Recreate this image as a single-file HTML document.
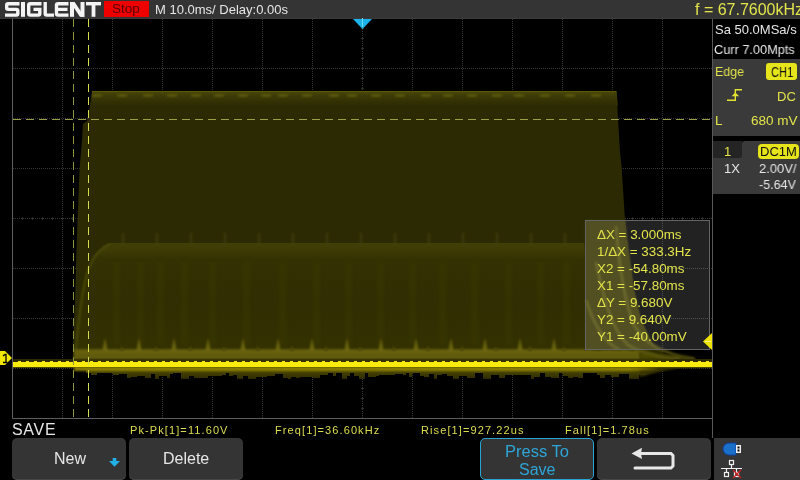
<!DOCTYPE html>
<html><head><meta charset="utf-8">
<style>
html,body{margin:0;padding:0;background:#000;width:800px;height:480px;overflow:hidden;}
body{position:relative;font-family:"Liberation Sans",sans-serif;}
.a{position:absolute;white-space:pre;line-height:1;will-change:transform;}
.y{color:#e2e44a;}
.w{color:#e6e6e6;}
.m{position:absolute;white-space:pre;line-height:1;font-family:"Liberation Sans",sans-serif;font-size:11px;letter-spacing:1.1px;color:#dcdc50;will-change:transform;}
.btn{position:absolute;background:#343434;border-radius:5px;}
svg{position:absolute;left:0;top:0;}
</style></head><body>
<!-- top bar -->
<div style="position:absolute;left:0;top:0;width:800px;height:18px;background:#343434;"></div><div style="position:absolute;left:0;top:18px;width:800px;height:1px;background:#3a3a3a;"></div>
<svg width="800" height="20" viewBox="0 0 800 20">
  <g fill="none" stroke="#f4f4f4" stroke-width="3.4">
    <path d="M19.5 3.7H8.2Q6.7 3.7 6.7 5.2V7.8Q6.7 9.35 8.2 9.35H16.3Q17.8 9.35 17.8 10.85V13.6Q17.8 15.1 16.3 15.1H5"/>
    <path d="M41.5 3.7H30.3Q28.7 3.7 28.7 5.3V13.5Q28.7 15.1 30.3 15.1H38.2Q39.8 15.1 39.8 13.5V9.35H33.5"/>
    <path d="M45.2 2V13.5Q45.2 15.1 46.8 15.1H54"/>
    <path d="M68.5 3.7H58.1Q56.5 3.7 56.5 5.3V13.5Q56.5 15.1 58.1 15.1H68.5M56.5 9.35H67.5"/>
  </g>
  <g fill="#f4f4f4">
    <rect x="21" y="2" width="4" height="14.8"/>
    <rect x="70" y="2" width="4" height="14.8"/>
    <rect x="80.5" y="2" width="4" height="14.8"/>
    <path d="M70 2H74.6L84.5 16.8H79.9Z"/>
    <rect x="86" y="2" width="15" height="3.4"/>
    <rect x="91.6" y="2" width="3.8" height="14.8"/>
  </g>
</svg>
<div style="position:absolute;left:104px;top:1px;width:45px;height:16px;background:#ee0000;"></div>
<div class="a" style="left:112px;top:2px;font-size:13.5px;color:#560000;">Stop</div>
<div class="a w" style="left:155px;top:2.5px;font-size:13px;">M 10.0ms/ Delay:0.00s</div>
<div class="a y" style="left:695px;top:2px;font-size:16px;">f = 67.7600kHz</div>
<!-- grid & waveform -->
<svg width="800" height="480" viewBox="0 0 800 480">
  <defs>
    <linearGradient id="tg" x1="0" y1="0" x2="0" y2="1">
      <stop offset="0" stop-color="#4a480a"/>
      <stop offset="0.35" stop-color="#3c3a06"/>
      <stop offset="1" stop-color="#2c2a02"/>
    </linearGradient>
    <linearGradient id="bg" x1="0" y1="0" x2="0" y2="1">
      <stop offset="0" stop-color="#5a5404"/>
      <stop offset="0.5" stop-color="#423e02"/>
      <stop offset="1" stop-color="#2e2a02"/>
    </linearGradient>
    <linearGradient id="ig" x1="0" y1="0" x2="0" y2="1">
      <stop offset="0" stop-color="#423f06"/>
      <stop offset="0.06" stop-color="#3e3b05"/>
      <stop offset="0.14" stop-color="#343203"/>
      <stop offset="0.5" stop-color="#302e02"/>
      <stop offset="1" stop-color="#343202"/>
    </linearGradient>
    <linearGradient id="lg" x1="0" y1="0" x2="0" y2="1">
      <stop offset="0" stop-color="#5a5608"/>
      <stop offset="0.25" stop-color="#6a640c"/>
      <stop offset="0.6" stop-color="#5e5808"/>
      <stop offset="1" stop-color="#6a620a"/>
    </linearGradient>
    <filter id="bl" x="-50%" y="-50%" width="200%" height="200%"><feGaussianBlur stdDeviation="1.5"/></filter>
    <filter id="bl1" x="-10%" y="-50%" width="120%" height="200%"><feGaussianBlur stdDeviation="0.8"/></filter>
  </defs>
  <g stroke="#363636" stroke-width="1" stroke-dasharray="1 1" fill="none">
    <path d="M62.5 19V418M112.5 19V418M162.5 19V418M212.5 19V418M262.5 19V418M312.5 19V418M362.5 19V418M412.5 19V418M462.5 19V418M512.5 19V418M562.5 19V418M612.5 19V418M662.5 19V418"/>
    <path d="M13 68.5H712M13 118.5H712M13 168.5H712M13 218.5H712M13 268.5H712M13 318.5H712M13 368.5H712"/>
  </g>
  <path d="M22.5 217V220 M32.5 217V220 M42.5 217V220 M52.5 217V220 M62.5 217V220 M72.5 217V220 M82.5 217V220 M92.5 217V220 M102.5 217V220 M112.5 217V220 M122.5 217V220 M132.5 217V220 M142.5 217V220 M152.5 217V220 M162.5 217V220 M172.5 217V220 M182.5 217V220 M192.5 217V220 M202.5 217V220 M212.5 217V220 M222.5 217V220 M232.5 217V220 M242.5 217V220 M252.5 217V220 M262.5 217V220 M272.5 217V220 M282.5 217V220 M292.5 217V220 M302.5 217V220 M312.5 217V220 M322.5 217V220 M332.5 217V220 M342.5 217V220 M352.5 217V220 M362.5 217V220 M372.5 217V220 M382.5 217V220 M392.5 217V220 M402.5 217V220 M412.5 217V220 M422.5 217V220 M432.5 217V220 M442.5 217V220 M452.5 217V220 M462.5 217V220 M472.5 217V220 M482.5 217V220 M492.5 217V220 M502.5 217V220 M512.5 217V220 M522.5 217V220 M532.5 217V220 M542.5 217V220 M552.5 217V220 M562.5 217V220 M572.5 217V220 M582.5 217V220 M592.5 217V220 M602.5 217V220 M612.5 217V220 M622.5 217V220 M632.5 217V220 M642.5 217V220 M652.5 217V220 M662.5 217V220 M672.5 217V220 M682.5 217V220 M692.5 217V220 M702.5 217V220 M361 28.5H364 M361 38.5H364 M361 48.5H364 M361 58.5H364 M361 68.5H364 M361 78.5H364 M361 88.5H364 M361 98.5H364 M361 108.5H364 M361 118.5H364 M361 128.5H364 M361 138.5H364 M361 148.5H364 M361 158.5H364 M361 168.5H364 M361 178.5H364 M361 188.5H364 M361 198.5H364 M361 208.5H364 M361 218.5H364 M361 228.5H364 M361 238.5H364 M361 248.5H364 M361 258.5H364 M361 268.5H364 M361 278.5H364 M361 288.5H364 M361 298.5H364 M361 308.5H364 M361 318.5H364 M361 328.5H364 M361 338.5H364 M361 348.5H364 M361 358.5H364 M361 368.5H364 M361 378.5H364 M361 388.5H364 M361 398.5H364 M361 408.5H364" stroke="#2c2c2c" stroke-width="1" fill="none"/>
  <path d="M12.5 19V418.5H712" stroke="#5e5e5e" stroke-width="1" fill="none"/>

  <!-- waveform persistence -->
  <path d="M73 358 L73.5 330 L75 300 L76.5 250 L77.5 220 L79.5 170 L82 140 L83 124 L87 121 L89.5 108 L92 91 L616.5 91 L618 119 L620 152 L621.5 166 L625 220 L628 246 L634 290 L641 320 L653 345 L665 354 L690 359 L712 359 L712 368 L660 369 L640 372 L100 372 L88 370 L78 369 L73 367 Z" fill="#2c2a02"/>
  <path d="M92 91H616.5L618 106H92Z" fill="url(#tg)"/>
  <path d="M92 91.5H616" stroke="#5a5608" stroke-width="1.2"/>
  <path d="M92 95.5H616" stroke="#44420a" stroke-width="1.5" filter="url(#bl1)"/><g filter="url(#bl1)" fill="#6a6616" opacity="0.8"><ellipse cx="97" cy="95.5" rx="5.5" ry="1.2"/><ellipse cx="122" cy="95.5" rx="5.5" ry="1.2"/><ellipse cx="148" cy="95.5" rx="5.5" ry="1.2"/><ellipse cx="172" cy="95.5" rx="5.5" ry="1.2"/><ellipse cx="196" cy="95.5" rx="5.5" ry="1.2"/><ellipse cx="219" cy="95.5" rx="5.5" ry="1.2"/><ellipse cx="243" cy="95.5" rx="5.5" ry="1.2"/><ellipse cx="266" cy="95.5" rx="5.5" ry="1.2"/><ellipse cx="283" cy="95.5" rx="5.5" ry="1.2"/><ellipse cx="307" cy="95.5" rx="5.5" ry="1.2"/><ellipse cx="334" cy="95.5" rx="5.5" ry="1.2"/><ellipse cx="352" cy="95.5" rx="5.5" ry="1.2"/><ellipse cx="376" cy="95.5" rx="5.5" ry="1.2"/><ellipse cx="400" cy="95.5" rx="5.5" ry="1.2"/><ellipse cx="426" cy="95.5" rx="5.5" ry="1.2"/><ellipse cx="448" cy="95.5" rx="5.5" ry="1.2"/><ellipse cx="472" cy="95.5" rx="5.5" ry="1.2"/><ellipse cx="497" cy="95.5" rx="5.5" ry="1.2"/><ellipse cx="519" cy="95.5" rx="5.5" ry="1.2"/><ellipse cx="545" cy="95.5" rx="5.5" ry="1.2"/><ellipse cx="570" cy="95.5" rx="5.5" ry="1.2"/><ellipse cx="596" cy="95.5" rx="5.5" ry="1.2"/></g>
  <path d="M74 358 C77 320 82 290 88 270 C92 259 98 249 110 243 L584 243 L592 300 L612 350 L74 350Z" fill="url(#ig)"/>
  <path d="M116.5 262V345 M140.5 262V345 M160.5 262V345 M184.5 262V345 M212.5 262V345 M246.5 262V345 M282.5 262V345 M316.5 262V345 M348.5 262V345 M380.5 262V345 M412.5 262V345 M442.5 262V345 M474.5 262V345 M508.5 262V345 M540.5 262V345 M566.5 262V345" stroke="#3c3a04" stroke-width="7" opacity="0.35" filter="url(#bl)"/>
  <path d="M75 362 C78 320 82 290 88 270 C92 259 98 249 110 244" stroke="#4c4a08" stroke-width="2" fill="none" filter="url(#bl1)"/>
  <path d="M123 246V233 M157 246V233 M191 246V233 M225 246V233 M259 246V233 M293 246V233 M327 246V233 M361 246V233 M395 246V233 M429 246V233 M463 246V233 M497 246V233 M531 246V233 M565 246V233" stroke="#44420a" stroke-width="1.5" filter="url(#bl1)"/>
  <path d="M74 349 H640 V359 H74Z" fill="url(#lg)" filter="url(#bl1)"/>
  <path d="M640 349 L640 359 L672 359 C660 356 650 352 640 349Z" fill="#4a4606" filter="url(#bl1)"/>
  <path d="M102 352 L105 338 L108 352Z M136 352 L139 338 L142 352Z M171 352 L174 338 L177 352Z M205 352 L208 338 L211 352Z M240 352 L243 338 L246 352Z M275 352 L278 338 L281 352Z M309 352 L312 338 L315 352Z M344 352 L347 338 L350 352Z M378 352 L381 338 L384 352Z M413 352 L416 338 L419 352Z M448 352 L451 338 L454 352Z M482 352 L485 338 L488 352Z M517 352 L520 338 L523 352Z M551 352 L554 338 L557 352Z M586 352 L589 338 L592 352Z M621 352 L624 338 L627 352Z" fill="#6a640c" filter="url(#bl1)"/>
  <path d="M119.5 351 L122 346 L124.5 351Z M153.5 351 L156 346 L158.5 351Z M187.5 351 L190 346 L192.5 351Z M221.5 351 L224 346 L226.5 351Z M255.5 351 L258 346 L260.5 351Z M289.5 351 L292 346 L294.5 351Z M323.5 351 L326 346 L328.5 351Z M357.5 351 L360 346 L362.5 351Z M391.5 351 L394 346 L396.5 351Z M425.5 351 L428 346 L430.5 351Z M459.5 351 L462 346 L464.5 351Z M493.5 351 L496 346 L498.5 351Z M527.5 351 L530 346 L532.5 351Z M561.5 351 L564 346 L566.5 351Z M595.5 351 L598 346 L600.5 351Z M629.5 351 L632 346 L634.5 351Z" fill="#4e4a08" filter="url(#bl1)"/>
  <path d="M74 367 L74 368 L78 368 L78 369 L86 369 L86 373 L91 373 L91 375 L97 375 L97 373 L105 373 L105 373 L113 373 L113 375 L119 375 L119 374 L127 374 L127 378 L131 378 L131 377 L137 377 L137 376 L145 376 L145 378 L151 378 L151 374 L155 374 L155 379 L159 379 L159 376 L167 376 L167 378 L170 378 L170 374 L173 374 L173 373 L181 373 L181 379 L186 379 L186 379 L189 379 L189 376 L194 376 L194 378 L202 378 L202 378 L208 378 L208 376 L214 376 L214 376 L222 376 L222 375 L226 375 L226 373 L229 373 L229 376 L233 376 L233 375 L237 375 L237 379 L243 379 L243 376 L248 376 L248 379 L256 379 L256 377 L262 377 L262 377 L267 377 L267 376 L275 376 L275 374 L283 374 L283 378 L288 378 L288 379 L291 379 L291 377 L296 377 L296 378 L300 378 L300 377 L305 377 L305 377 L313 377 L313 378 L316 378 L316 378 L320 378 L320 375 L328 375 L328 373 L333 373 L333 376 L336 376 L336 373 L342 373 L342 379 L347 379 L347 376 L350 376 L350 373 L354 373 L354 376 L359 376 L359 379 L365 379 L365 373 L368 373 L368 377 L376 377 L376 376 L379 376 L379 375 L387 375 L387 375 L395 375 L395 374 L403 374 L403 375 L406 375 L406 373 L409 373 L409 377 L412 377 L412 373 L420 373 L420 376 L424 376 L424 377 L429 377 L429 374 L434 374 L434 379 L437 379 L437 375 L442 375 L442 374 L447 374 L447 376 L453 376 L453 379 L459 379 L459 376 L467 376 L467 378 L475 378 L475 373 L483 373 L483 379 L491 379 L491 375 L499 375 L499 378 L505 378 L505 375 L509 375 L509 375 L515 375 L515 375 L523 375 L523 375 L531 375 L531 379 L534 379 L534 377 L540 377 L540 373 L545 373 L545 377 L551 377 L551 378 L559 378 L559 373 L563 373 L563 376 L568 376 L568 378 L573 378 L573 377 L578 377 L578 378 L583 378 L583 373 L589 373 L589 373 L597 373 L597 375 L600 375 L600 378 L605 378 L605 375 L611 375 L611 377 L619 377 L619 374 L624 374 L624 374 L629 374 L629 379 L634 379 L634 379 L639 379 L639 375 L647 375 L640 367 Z" fill="url(#bg)"/>
  <path d="M640 367 L640 377 C650 374 660 371 680 368 Z" fill="#3a3602" filter="url(#bl1)"/>
  <path d="M585 220 L625 220 L628 246 L634 290 L641 320 L653 345 L660 350 L585 350Z" fill="#383604" filter="url(#bl1)"/>
  <g fill="none" stroke="#5a560c" stroke-width="3" filter="url(#bl1)" opacity="0.9">
    <path d="M616 226 C619 265 624 300 634 325 C644 342 660 354 695 359"/>
    <path d="M596 262 C604 300 612 330 628 345 C642 354 660 357 680 359"/>
    <path d="M586 300 C594 325 604 343 620 350"/>
  </g>
  <rect x="13" y="359" width="699" height="3" fill="#2e2a00"/>
  <rect x="74" y="359" width="600" height="2" fill="#3a3600"/>
  <rect x="13" y="367" width="699" height="1" fill="#4a4400"/><path d="M74 367H630L660 368.5L630 371H74Z" fill="#8a7e00" filter="url(#bl1)"/>
  <rect x="13" y="362" width="699" height="5" fill="#faec0a"/>
  <path d="M18 361.5h3 M26 361.5h3 M34 361.5h3 M42 361.5h3 M50 361.5h3 M58 361.5h3 M66 361.5h3 M74 361.5h3 M82 361.5h3 M90 361.5h3 M98 361.5h3 M106 361.5h3 M114 361.5h3 M122 361.5h3 M130 361.5h3 M138 361.5h3 M146 361.5h3 M154 361.5h3 M162 361.5h3 M170 361.5h3 M178 361.5h3 M186 361.5h3 M194 361.5h3 M202 361.5h3 M210 361.5h3 M218 361.5h3 M226 361.5h3 M234 361.5h3 M242 361.5h3 M250 361.5h3 M258 361.5h3 M266 361.5h3 M274 361.5h3 M282 361.5h3 M290 361.5h3 M298 361.5h3 M306 361.5h3 M314 361.5h3 M322 361.5h3 M330 361.5h3 M338 361.5h3 M346 361.5h3 M354 361.5h3 M362 361.5h3 M370 361.5h3 M378 361.5h3 M386 361.5h3 M394 361.5h3 M402 361.5h3 M410 361.5h3 M418 361.5h3 M426 361.5h3 M434 361.5h3 M442 361.5h3 M450 361.5h3 M458 361.5h3 M466 361.5h3 M474 361.5h3 M482 361.5h3 M490 361.5h3 M498 361.5h3 M506 361.5h3 M514 361.5h3 M522 361.5h3 M530 361.5h3 M538 361.5h3 M546 361.5h3 M554 361.5h3 M562 361.5h3 M570 361.5h3 M578 361.5h3 M586 361.5h3 M594 361.5h3 M602 361.5h3 M610 361.5h3 M618 361.5h3 M626 361.5h3 M634 361.5h3 M642 361.5h3 M650 361.5h3 M658 361.5h3 M666 361.5h3 M674 361.5h3 M682 361.5h3 M690 361.5h3 M698 361.5h3 M706 361.5h3" stroke="#faec0a" stroke-width="1"/>

  <!-- cursors -->
  <path d="M73.5 19V418" stroke="#8c9440" stroke-width="1" stroke-dasharray="8 5"/>
  <path d="M88.5 19V418" stroke="#d4dc50" stroke-width="1" stroke-dasharray="8 5"/>
  <path d="M13 119.5H712" stroke="#9a9e46" stroke-width="1" stroke-dasharray="8 5"/>

  <!-- measure box -->
  <rect x="585.5" y="220.5" width="124" height="129" fill="rgba(240,240,250,0.14)" stroke="#646464" stroke-width="1"/>

  <!-- markers -->
  <path d="M353 19 L372 19 L362.5 29 Z" fill="#1ab4ea"/><path d="M362.5 18V27" stroke="#70d8f8" stroke-width="1"/>
  <path d="M0 351 L5 351 L12 358 L5 365 L0 365 Z" fill="#f0e600"/>
  <path d="M3 356 L5 354.5 H6 V362 M3 362.5 H7.5" stroke="#000" stroke-width="1.3" fill="none"/>
  <path d="M712 333 L712 350 L703 341.5 Z" fill="#eee400"/><path d="M705 341.5H711" stroke="#faf27a" stroke-width="1"/>
</svg>
<!-- measure text -->
<div class="a y" style="left:597px;top:226px;font-size:13.4px;line-height:17px;">ΔX = 3.000ms
1/ΔX = 333.3Hz
X2 = -54.80ms
X1 = -57.80ms
ΔY = 9.680V
Y2 = 9.640V
Y1 = -40.00mV</div>

<!-- right panel -->
<div style="position:absolute;left:712px;top:19px;width:1px;height:419px;background:#585858;"></div>
<div class="a w" style="left:714.5px;top:23px;font-size:13px;">Sa 50.0MSa/s</div>
<div class="a w" style="left:714px;top:42.5px;font-size:13px;transform:scaleX(0.98);transform-origin:0 0;">Curr 7.00Mpts</div>
<div style="position:absolute;left:713px;top:59px;width:87px;height:77px;background:#3a3a3a;"></div>
<div class="a y" style="left:714.5px;top:64.5px;font-size:13px;transform:scaleX(0.95);transform-origin:0 0;">Edge</div>
<div style="position:absolute;left:766px;top:63px;width:31px;height:17px;background:#e6e41a;border-radius:3px;"></div>
<div class="a" style="left:771px;top:64.5px;font-size:14px;color:#101010;transform:scaleX(0.8);transform-origin:0 0;">CH1</div>
<div class="a y" style="left:777px;top:89.5px;font-size:13px;">DC</div>
<div class="a y" style="left:714.5px;top:114px;font-size:13.5px;">L</div>
<div class="a y" style="left:750.5px;top:114px;font-size:13.5px;">680 mV</div>
<svg width="800" height="480">
  <path d="M727 100.3H735.3V89.7H742" stroke="#e4e230" stroke-width="1.4" fill="none"/>
  <path d="M731.6 96.2 L735.3 92.4 L739.2 96.2 Z" fill="#e4e230"/>
</svg>
<div style="position:absolute;left:713px;top:141px;width:87px;height:53px;background:#3a3a3a;"></div>
<div style="position:absolute;left:713px;top:141px;width:29px;height:17px;background:#242424;border-bottom-right-radius:3px;"></div>
<div style="position:absolute;left:742px;top:141px;width:3px;height:3px;background:#000;"></div>
<div style="position:absolute;left:742px;top:141px;width:6px;height:6px;background:#3a3a3a;border-top-left-radius:3px;"></div>
<div class="a y" style="left:723.5px;top:145px;font-size:13px;">1</div>
<div style="position:absolute;left:758px;top:144px;width:41px;height:15px;background:#e6e41a;border-radius:4px;"></div>
<div class="a" style="left:759.5px;top:144.5px;font-size:13px;color:#101010;">DC1M</div>
<div class="a w" style="left:723.5px;top:162px;font-size:13px;">1X</div>
<div class="a w" style="left:759px;top:162px;font-size:13.5px;transform:scaleX(0.96);transform-origin:0 0;">2.00V/</div>
<div class="a w" style="left:759px;top:177.5px;font-size:13.5px;transform:scaleX(0.93);transform-origin:0 0;">-5.64V</div>

<!-- bottom -->
<div class="a w" style="left:11.5px;top:422px;font-size:16px;letter-spacing:0.7px;">SAVE</div>
<div class="m" style="left:130px;top:424.5px;">Pk-Pk[1]=11.60V</div>
<div class="m" style="left:275px;top:424.5px;">Freq[1]=36.60kHz</div>
<div class="m" style="left:421px;top:424.5px;">Rise[1]=927.22us</div>
<div class="m" style="left:565px;top:424.5px;">Fall[1]=1.78us</div>
<div class="btn" style="left:12px;top:438px;width:114px;height:42px;box-shadow:inset 0 -1px 0 #464646;"></div>
<div class="a w" style="left:53.5px;top:451px;font-size:16px;">New</div>
<div class="btn" style="left:129px;top:438px;width:114px;height:42px;box-shadow:inset 0 -1px 0 #464646;"></div>
<div class="a w" style="left:163px;top:451px;font-size:16px;">Delete</div>
<div class="btn" style="left:480px;top:438px;width:114px;height:42px;box-sizing:border-box;border:1.5px solid #28a4d4;"></div>
<div class="a" style="left:504.5px;top:443px;font-size:16.5px;color:#2ea6d8;">Press To</div>
<div class="a" style="left:519px;top:462px;font-size:16px;color:#2ea6d8;">Save</div>
<div class="btn" style="left:597px;top:438px;width:114px;height:42px;box-shadow:inset 0 -1px 0 #464646;"></div>
<div style="position:absolute;left:714px;top:438px;width:86px;height:46px;background:#353535;"></div>
<svg width="800" height="480">
  <path d="M112.7 458H116.3V461H120L114.5 466.8L109 461H112.7Z" fill="#22b0e8"/>
  <path d="M640 453.5H671L673 455.5V466L671 468H635" stroke="#e8e8e8" stroke-width="3" fill="none" stroke-linecap="round"/>
  <path d="M631.5 453.5 L642 447.8 L641 453.5 L642 459 Z" fill="#e8e8e8"/>
  <path d="M729 443 H736 V455 H729 A6 6 0 0 1 729 443 Z" fill="#1a70c8" stroke="#1040a0" stroke-width="1"/>
  <rect x="736" y="445" width="5" height="8" fill="#f0f0f0"/>
  <rect x="737.5" y="446.5" width="2" height="2" fill="#000"/>
  <rect x="737.5" y="449.5" width="2" height="2" fill="#000"/>
  <g stroke="#f0f0f0" stroke-width="1.2" fill="none">
    <rect x="729.5" y="460.5" width="4" height="4"/>
    <path d="M731.5 465V468.5M721 468.5H742M726.5 468.5V472M736.5 468.5V472"/>
    <rect x="724.5" y="472.5" width="4" height="4"/>
    <rect x="734.5" y="472.5" width="4" height="4"/>
  </g>
  <path d="M733 470L741 478M741 470L733 478" stroke="#d02020" stroke-width="1.3"/>
</svg>
</body></html>
